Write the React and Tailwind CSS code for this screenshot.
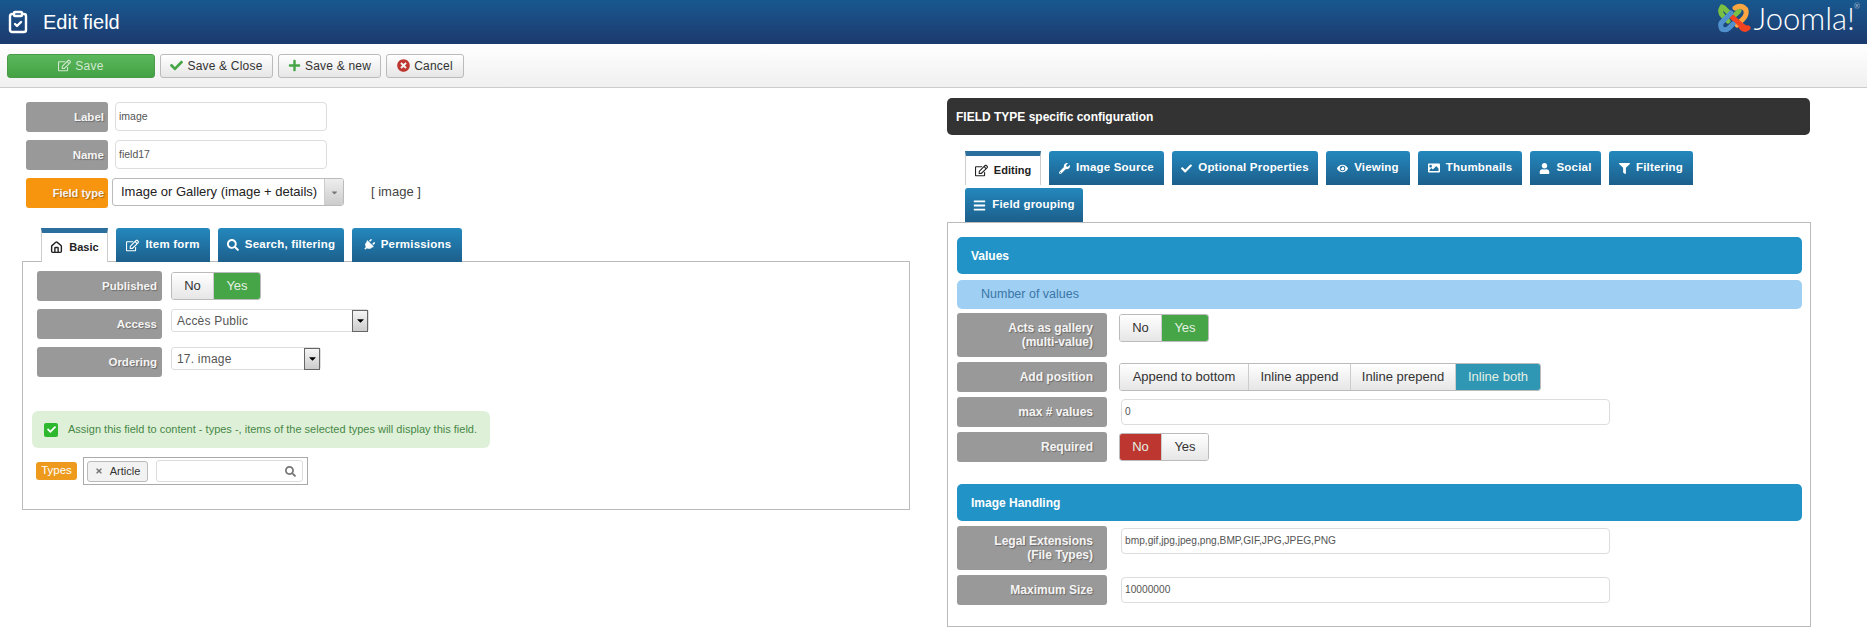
import { ClipboardCheck, Home } from "lucide-react";
import {
  FaBars,
  FaCaretDown,
  FaCheck,
  FaEye,
  FaFilter,
  FaImage,
  FaPlug,
  FaPlus,
  FaRegEdit,
  FaSearch,
  FaTimes,
  FaTimesCircle,
  FaUser,
  FaWrench,
} from "react-icons/fa";

const LEFT_TABS = [
  { title: "Item form", icon: <FaRegEdit size={13} />, width: "w-[94px]" },
  { title: "Search, filtering", icon: <FaSearch size={12} />, width: "w-[126px]" },
  { title: "Permissions", icon: <FaPlug size={12} className="rotate-45" />, width: "w-[110px]" },
];

const RIGHT_TABS = [
  { title: "Image Source", icon: <FaWrench size={11} />, width: "w-[115px]" },
  { title: "Optional Properties", icon: <FaCheck size={11} />, width: "w-[146px]" },
  { title: "Viewing", icon: <FaEye size={11} />, width: "w-[84px]" },
  { title: "Thumbnails", icon: <FaImage size={12} />, width: "w-[104px]" },
  { title: "Social", icon: <FaUser size={11} />, width: "w-[71px]" },
  { title: "Filtering", icon: <FaFilter size={11} />, width: "w-[84px]" },
  { title: "Field grouping", icon: <FaBars size={13} />, width: "w-[118px]" },
];

function JoomlaLogo() {
  return (
    <svg width="36" height="32" viewBox="0 0 36 30" fill="none" strokeWidth="5" strokeLinecap="round">
      <path d="M8 5 L14 11 Q17 14 20 11 L23 8" stroke="#7ac143" />
      <path d="M6 4 Q3 9 7 13 L12 18" stroke="#7ac143" />
      <path d="M26 4 Q31 5 30 11 Q29 15 25 18 L21 22" stroke="#f9a541" />
      <path d="M19 5 Q23 2 27 4" stroke="#f9a541" />
      <path d="M15 13 L23 20 Q26 23 30 25" stroke="#f44321" />
      <path d="M25 24 Q28 28 32 25" stroke="#f44321" />
      <path d="M6 26 Q3 21 7 18 L15 10" stroke="#5091cd" />
      <path d="M6 26 Q10 28 13 25 L17 21" stroke="#5091cd" />
    </svg>
  );
}

function ToolButton({ icon, children, width }) {
  return (
    <button className={`flex h-6 items-center justify-center gap-1 rounded-[3px] border border-[#bbb] bg-gradient-to-b from-white to-[#e6e6e6] text-[12px] tracking-[0.2px] text-[#333] ${width}`}>
      {icon}
      {children}
    </button>
  );
}

function FieldLabel({ children, className = "w-[125px] pr-[5px] text-[11.5px]", height = "h-[30px]", color = "bg-[#999]" }) {
  return (
    <div className={`flex shrink-0 items-center justify-end rounded-[3px] text-right font-bold leading-[14px] text-[#f4f4f4] [text-shadow:1px_1px_1px_rgba(0,0,0,0.3)] ${color} ${height} ${className}`}>
      <span>{children}</span>
    </div>
  );
}

function TextBox({ children, className }) {
  return (
    <div className={`flex items-center rounded-[4px] border border-[#ddd] bg-white pl-[3px] text-[#555] ${className}`}>
      {children}
    </div>
  );
}

function Toggle({ options, active, activeColor }) {
  return (
    <div className="flex h-[28px] overflow-hidden rounded-[3px] border border-[#bbb] text-[13px]">
      {options.map((opt, i) => (
        <div
          key={opt.label}
          className={`flex items-center justify-center ${opt.width} ${i > 0 ? "border-l border-[#ccc]" : ""} ${
            i === active ? `${activeColor} text-[#e4f0e4]` : "bg-gradient-to-b from-white to-[#e6e6e6] text-[#333]"
          }`}
        >
          {opt.label}
        </div>
      ))}
    </div>
  );
}

function NativeSelect({ value, width }) {
  return (
    <div className={`flex h-[23px] items-center justify-between rounded-[3px] border border-[#ddd] bg-white pl-[5px] text-[12px] tracking-[0.2px] text-[#555] ${width}`}>
      {value}
      <span className="flex h-[22px] w-4 items-center justify-center border border-[#666] bg-gradient-to-b from-[#f5f5f5] to-[#ccc] text-black">
        <FaCaretDown size={11} />
      </span>
    </div>
  );
}

function Tab({ title, icon, width }) {
  return (
    <div className={`flex h-[34px] items-center justify-center gap-[6px] rounded-t-[3px] bg-gradient-to-b from-[#2488bd] to-[#1c5f8c] text-[11.5px] font-bold tracking-[0.2px] text-white ${width}`}>
      {icon}
      {title}
    </div>
  );
}

function ActiveTab({ title, icon, width }) {
  return (
    <div className={`relative z-10 flex h-[34px] items-center justify-center gap-[6px] border-x border-[#ccc] border-t-[5px] border-t-[#2a6f9e] bg-white text-[11px] font-bold text-[#222] ${width}`}>
      {icon}
      {title}
    </div>
  );
}

function SectionBar({ children, className = "" }) {
  return (
    <div className={`flex h-[37px] items-center rounded-[5px] bg-[#2293c6] pl-[14px] text-[12px] font-bold text-white ${className}`}>
      {children}
    </div>
  );
}

function ConfigRow({ label, height, className = "", children }) {
  return (
    <div className={`flex gap-3 ${className}`}>
      <FieldLabel className="w-[150px] pr-[14px] text-[12px]" height={height}>{label}</FieldLabel>
      {children}
    </div>
  );
}

function App() {
  return (
    <div className="h-[634px] w-[1867px] overflow-hidden bg-white font-['Liberation_Sans',sans-serif]">
      <header className="flex h-[44px] items-center justify-between bg-gradient-to-b from-[#17588f] to-[#1c3a6e] pl-[6px] pr-[12px]">
        <div className="flex items-center gap-[13px] text-white">
          <ClipboardCheck size={24} strokeWidth={2.4} />
          <h1 className="text-[20px] leading-none">Edit field</h1>
        </div>
        <div className="-mt-[8px] flex items-center gap-px">
          <JoomlaLogo />
          <span className="relative font-['Lato',sans-serif] text-[31px] font-light leading-none text-white">
            Joomla!
            <span className="absolute -right-[5px] top-0 text-[7px]">®</span>
          </span>
        </div>
      </header>

      <div className="flex h-[44px] items-center gap-[5px] border-b border-[#ccc] bg-gradient-to-b from-white to-[#f0f0f0] pl-[7px]">
        <button className="flex h-6 w-[148px] items-center justify-center gap-1 rounded-[3px] border border-[#4a9a4a] bg-gradient-to-b from-[#5cb85c] to-[#44a144] text-[12px] tracking-[0.3px] text-[#cfe8cf]">
          <FaRegEdit size={13} />
          Save
        </button>
        <ToolButton width="w-[113px]" icon={<FaCheck size={13} className="text-[#46a546]" />}>Save &amp; Close</ToolButton>
        <ToolButton width="w-[103px]" icon={<FaPlus size={13} className="text-[#46a546]" />}>Save &amp; new</ToolButton>
        <ToolButton width="w-[78px]" icon={<FaTimesCircle size={13} className="text-[#bd362f]" />}>Cancel</ToolButton>
      </div>

      <main className="flex">
        <section className="w-[947px] shrink-0 pl-[22px] pt-[14px]">
          <div className="flex flex-col gap-2 pl-1">
            <div className="flex gap-[7px]">
              <FieldLabel className="w-[82px] pr-1 text-[11.5px]">Label</FieldLabel>
              <TextBox className="h-[29px] w-[212px] text-[10.5px]">image</TextBox>
            </div>
            <div className="flex gap-[7px]">
              <FieldLabel className="w-[82px] pr-1 text-[11.5px]">Name</FieldLabel>
              <TextBox className="h-[29px] w-[212px] text-[10.5px]">field17</TextBox>
            </div>
            <div className="flex gap-1">
              <FieldLabel className="w-[82px] pr-1 text-[11px]" color="bg-[#f7950e]">Field type</FieldLabel>
              <div className="flex h-[28px] w-[232px] items-center justify-between overflow-hidden whitespace-nowrap rounded-[3px] border border-[#bbb] bg-white pl-2 text-[13px] text-[#222]">
                Image or Gallery (image + details)
                <span className="flex h-full w-[19px] shrink-0 items-center justify-center border-l border-[#ccc] bg-gradient-to-b from-[#eee] to-[#ccc] text-[#777]">
                  <FaCaretDown size={9} />
                </span>
              </div>
              <span className="ml-[23px] mt-[4px] text-[13px] text-[#444]">[ image ]</span>
            </div>
          </div>

          <div className="mt-5 flex gap-2 pl-[19px]">
            <ActiveTab title="Basic" icon={<Home size={13} strokeWidth={2.6} />} width="w-[67px]" />
            {LEFT_TABS.map((tab) => (
              <Tab key={tab.title} {...tab} />
            ))}
          </div>

          <div className="-mt-px h-[249px] w-[888px] border border-[#bbb] pl-[14px] pt-[9px]">
            <div className="flex flex-col gap-2">
              <div className="flex gap-[9px]">
                <FieldLabel>Published</FieldLabel>
                <div className="mt-px">
                  <Toggle
                    options={[{ label: "No", width: "w-[41px]" }, { label: "Yes", width: "w-[47px]" }]}
                    active={1}
                    activeColor="bg-[#46a546]"
                  />
                </div>
              </div>
              <div className="flex gap-[9px]">
                <FieldLabel>Access</FieldLabel>
                <NativeSelect value="Accès Public" width="w-[198px]" />
              </div>
              <div className="flex gap-[9px]">
                <FieldLabel>Ordering</FieldLabel>
                <NativeSelect value="17. image" width="w-[150px]" />
              </div>
            </div>

            <div className="-ml-[5px] mt-[34px] flex h-[37px] w-[458px] items-center gap-[10px] rounded-[6px] bg-[#dff0d8] pl-3 text-[11px] text-[#468847]">
              <span className="flex h-[14px] w-[14px] items-center justify-center rounded-[2px] bg-[#2eb82e] text-white">
                <FaCheck size={9} />
              </span>
              Assign this field to content - types -, items of the selected types will display this field.
            </div>

            <div className="-ml-px mt-[9px] flex items-center gap-[6px]">
              <span className="flex h-[18px] w-[41px] items-center justify-center rounded-[3px] bg-[#ee9a1c] text-[11.5px] text-white">Types</span>
              <div className="flex h-[28px] w-[225px] items-center gap-2 border border-[#aaa] pl-[3px]">
                <span className="flex h-[21px] w-[61px] items-center justify-center gap-[7px] rounded-[3px] border border-[#bbb] bg-[#f2f2f2] text-[11px] text-[#333]">
                  <FaTimes size={8} className="text-[#777]" />
                  Article
                </span>
                <span className="flex h-[22px] w-[147px] items-center justify-end rounded-[3px] border border-[#ddd] pr-[6px] text-[#777]">
                  <FaSearch size={11} />
                </span>
              </div>
            </div>
          </div>
        </section>

        <section className="w-[864px] shrink-0 pt-[10px]">
          <div className="flex h-[37px] w-[863px] items-center rounded-[5px] bg-[#333] pl-[9px] text-[12px] font-bold text-white">
            FIELD TYPE specific configuration
          </div>

          <div className="mt-4 flex w-[760px] flex-wrap gap-x-2 gap-y-[3px] pl-[18px]">
            <ActiveTab title="Editing" icon={<FaRegEdit size={13} />} width="w-[76px]" />
            {RIGHT_TABS.map((tab) => (
              <Tab key={tab.title} {...tab} />
            ))}
          </div>

          <div className="h-[405px] border border-[#bbb] pl-[9px] pr-2 pt-[14px]">
            <SectionBar>Values</SectionBar>
            <div className="mt-[6px] flex h-[29px] items-center rounded-[5px] bg-[#9fcff2] pl-6 text-[12.5px] text-[#3a76a8]">
              Number of values
            </div>

            <div className="mt-1 flex flex-col gap-[5px]">
              <ConfigRow label={<>Acts as gallery<br />(multi-value)</>} height="h-[44px]">
                <div className="mt-px">
                  <Toggle
                    options={[{ label: "No", width: "w-[41px]" }, { label: "Yes", width: "w-[47px]" }]}
                    active={1}
                    activeColor="bg-[#46a546]"
                  />
                </div>
              </ConfigRow>
              <ConfigRow label="Add position">
                <div className="mt-px">
                  <Toggle
                    options={[
                      { label: "Append to bottom", width: "w-[128px]" },
                      { label: "Inline append", width: "w-[102px]" },
                      { label: "Inline prepend", width: "w-[105px]" },
                      { label: "Inline both", width: "w-[85px]" },
                    ]}
                    active={3}
                    activeColor="bg-[#2f96b4]"
                  />
                </div>
              </ConfigRow>
              <ConfigRow label="max # values">
                <TextBox className="ml-[2px] mt-[2px] h-[26px] w-[489px] text-[10.2px]">0</TextBox>
              </ConfigRow>
              <ConfigRow label="Required">
                <div className="mt-px">
                  <Toggle
                    options={[{ label: "No", width: "w-[41px]" }, { label: "Yes", width: "w-[47px]" }]}
                    active={0}
                    activeColor="bg-[#bd362f]"
                  />
                </div>
              </ConfigRow>
            </div>

            <SectionBar className="mt-[22px]">Image Handling</SectionBar>

            <div className="mt-[5px] flex flex-col gap-[5px]">
              <ConfigRow label={<>Legal Extensions<br />(File Types)</>} height="h-[44px]">
                <TextBox className="ml-[2px] mt-[2px] h-[26px] w-[489px] text-[10.2px]">bmp,gif,jpg,jpeg,png,BMP,GIF,JPG,JPEG,PNG</TextBox>
              </ConfigRow>
              <ConfigRow label="Maximum Size">
                <TextBox className="ml-[2px] mt-[2px] h-[26px] w-[489px] text-[10.2px]">10000000</TextBox>
              </ConfigRow>
            </div>
          </div>
        </section>
      </main>
    </div>
  );
}

export default App;
